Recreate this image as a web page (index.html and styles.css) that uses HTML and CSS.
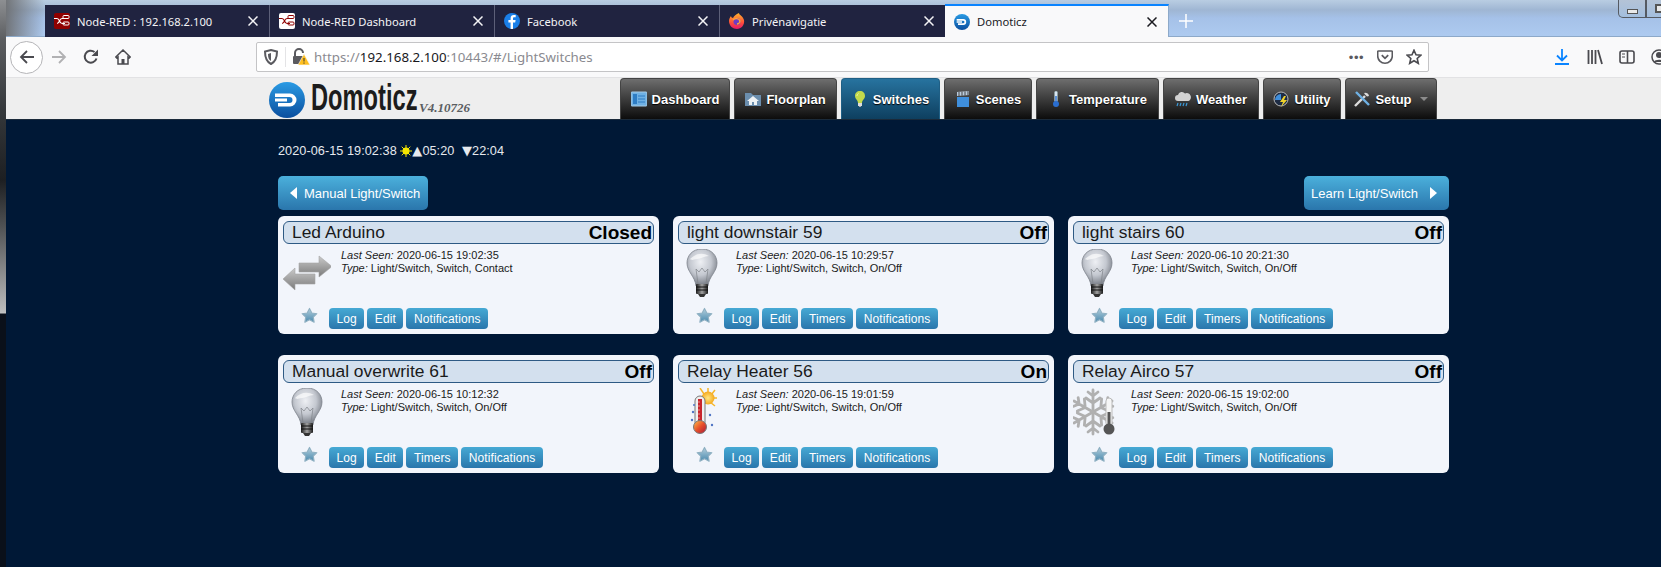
FILE: index.html
```html
<!DOCTYPE html>
<html lang="nl">
<head>
<meta charset="utf-8">
<title>Domoticz</title>
<link rel="stylesheet" href="styles.css">
</head>
<body>
<div class="edge"></div>
<div class="page">
<svg class="sprite" xmlns="http://www.w3.org/2000/svg">
  <defs>
    <radialGradient id="glass" cx="45%" cy="35%" r="65%"><stop offset="0" stop-color="#eef0f4"/><stop offset=".55" stop-color="#c4c8d0"/><stop offset="1" stop-color="#737881"/></radialGradient>
    <linearGradient id="base" x1="0" x2="1" y1="0" y2="0"><stop offset="0" stop-color="#1c1c1c"/><stop offset=".5" stop-color="#a0a0a0"/><stop offset="1" stop-color="#1c1c1c"/></linearGradient>
    <linearGradient id="star" x1="0" x2="0" y1="0" y2="1"><stop offset="0" stop-color="#b4d0de"/><stop offset="1" stop-color="#4a89ad"/></linearGradient>
    <linearGradient id="arrow" x1="0" x2="0" y1="0" y2="1"><stop offset="0" stop-color="#cacaca"/><stop offset="1" stop-color="#7a7a7a"/></linearGradient>
    <linearGradient id="logo" x1="0" x2="0" y1="0" y2="1"><stop offset="0" stop-color="#2a9be4"/><stop offset="1" stop-color="#0a4e9e"/></linearGradient>
    <radialGradient id="sun" cx=".5" cy=".5" r=".5"><stop offset="0" stop-color="#ffe680"/><stop offset="1" stop-color="#f4a81e"/></radialGradient>
    <linearGradient id="fire" x1="0" x2="1" y1="0" y2="1"><stop offset="0" stop-color="#ffc24a"/><stop offset=".5" stop-color="#e8502a"/><stop offset="1" stop-color="#a5163a"/></linearGradient>
    <symbol id="i-logo" viewBox="0 0 36 36">
      <circle cx="18" cy="18" r="18" fill="url(#logo)"/>
      <path d="M6 11.500h15a6.500 6.500 0 0 1 0 13H9v-3.500h11.500a3 3 0 0 0 0-6H6zM6 16.500h12v3H6z" fill="#fff"/>
    </symbol>
    <symbol id="i-star" viewBox="0 0 18 18">
      <path d="M9 1.500l2.500 4.800 5.300.8-3.800 3.700.9 5.300L9 13.600l-4.900 2.500.9-5.300-3.800-3.700 5.300-.8z" fill="url(#star)" stroke="#8fb0c2" stroke-width="1.200" stroke-linejoin="round"/>
    </symbol>
    <symbol id="i-bulb" viewBox="0 0 48 48">
      <path d="M24 0C14 0 9 7 9 14c0 9 8 13 9 23h12c1-10 9-14 9-23C39 7 34 0 24 0z" fill="url(#glass)" stroke="#7f848d" stroke-width=".8"/>
      <path d="M12 10c5-5 12-7 19-3-5 0-8 3-12 3s-4 2-7 0z" fill="#fff" opacity=".65"/>
      <path d="M20 35L18 20l3 3 3-4 3 4 3-3-2 15" fill="none" stroke="#7f848a" stroke-width=".7"/>
      <rect x="18" y="35" width="12" height="10" rx="1" fill="url(#base)"/>
      <path d="M18 38h12M18 41h12" stroke="#111" stroke-width="1"/>
      <path d="M20 45h8l-2 3h-4z" fill="#333"/>
    </symbol>
    <symbol id="i-arrows" viewBox="0 0 48 48">
      <path d="M16 14h20V7l13 10.500L36 28v-5H16z" fill="url(#arrow)" stroke="#a5a5a5" stroke-width=".6"/>
      <path d="M32 25H12v-6L0 30l12 11v-6h20z" fill="url(#arrow)" stroke="#a5a5a5" stroke-width=".6"/>
    </symbol>
    <symbol id="i-heat" viewBox="0 0 48 48">
      <g stroke="#f6b62a" stroke-width="1.500"><path d="M22 0l4 6M30 0v6M37 2l-4 5M39 10h-6M37 18l-5-4"/></g>
      <circle cx="30" cy="10" r="6.500" fill="url(#sun)"/>
      <rect x="17" y="8" width="10" height="31" rx="5" fill="#efefef" stroke="#777"/>
      <rect x="20" y="11" width="4" height="26" fill="#c8252c"/>
      <path d="M20 14h2M20 18h2M20 22h2M20 26h2M20 30h2" stroke="#f3b0a8" stroke-width=".8"/>
      <circle cx="22" cy="39" r="6.500" fill="url(#fire)" stroke="#777"/>
      <g fill="#4f74c4"><circle cx="15" cy="24" r="1.200"/><circle cx="14" cy="32" r="1.200"/><circle cx="32" cy="27" r="1.200"/><circle cx="34" cy="37" r="1.200"/><circle cx="16" cy="17" r="1"/></g>
    </symbol>
    <symbol id="i-snow" viewBox="0 0 48 48">
      <g fill="none" stroke="#b0b0b0" stroke-width="2.800" stroke-linecap="round">
        <g id="arm"><path d="M20 24V2M20 8l-5-4M20 8l5-4M20 15l-7-5M20 15l7-5"/></g>
        <use href="#arm" transform="rotate(60 20 24)"/>
        <use href="#arm" transform="rotate(120 20 24)"/>
        <use href="#arm" transform="rotate(180 20 24)"/>
        <use href="#arm" transform="rotate(240 20 24)"/>
        <use href="#arm" transform="rotate(300 20 24)"/>
      </g>
      <rect x="33" y="10" width="6" height="28" rx="3" fill="#f6f6f6" stroke="#bbb"/>
      <rect x="34.500" y="24" width="3" height="14" fill="#555"/>
      <circle cx="36" cy="41" r="5.500" fill="#555"/>
    </symbol>
    <symbol id="i-dash" viewBox="0 0 16 16"><rect x="0" y="1" width="16" height="14" rx="1" fill="#6fb1e4" stroke="#a6cbe6"/><rect x="2" y="3" width="4" height="10" fill="#2e7dc4"/><path d="M7 5h7M7 8h7M7 11h7" stroke="#2e7dc4"/></symbol>
    <symbol id="i-floor" viewBox="0 0 16 16"><path d="M0 2h6l2 2h8v11H0z" fill="#6b8eae"/><path d="M8 5l6 5h-2v4H9v-3H7v3H4v-4H2z" fill="#eef2f5"/></symbol>
    <symbol id="i-nbulb" viewBox="0 0 16 16"><path d="M8 0c-3 0-5 2-5 5 0 3 3 4 3 7h4c0-3 3-4 3-7 0-3-2-5-5-5z" fill="#c2d94c"/><path d="M6.500 2.500C5.500 3 5 4 5 5" stroke="#eef6b0" fill="none"/><rect x="6" y="12" width="4" height="3" fill="#ddd"/><rect x="7" y="15" width="2" height="1" fill="#aaa"/></symbol>
    <symbol id="i-scene" viewBox="0 0 16 16"><rect x="2" y="6" width="12" height="10" fill="#3f8fdc"/><path d="M2 1l12-1v4L2 5z" fill="#bcd"/><path d="M4 1v4M7 .7v4M10 .5v4M13 .2v4" stroke="#444"/></symbol>
    <symbol id="i-temp" viewBox="0 0 16 16"><rect x="6.500" y="0" width="3" height="11" rx="1.500" fill="#d9e6f2" stroke="#8aa" stroke-width=".4"/><rect x="7.300" y="5" width="1.400" height="7" fill="#2a6ed0"/><circle cx="8" cy="13" r="3" fill="#2a6ed0"/></symbol>
    <symbol id="i-cloud" viewBox="0 0 16 16"><path d="M3 10a3 3 0 0 1 0-6 4 4 0 0 1 7-1.500A3.500 3.500 0 0 1 13.500 10z" fill="#d2d2d2"/><path d="M3 12l-1 3M6 12l-1 3M9 12l-1 3M12 12l-1 3" stroke="#3a9ad9" stroke-width="1.200"/></symbol>
    <symbol id="i-util" viewBox="0 0 16 16"><circle cx="8" cy="8" r="7" fill="#1e2c44" stroke="#b9b9b9"/><path d="M2 9a6 6 0 0 1 6-6v6z" fill="#3f8fdc"/><path d="M11 5l-4 6h3l-2 5 6-7h-3l2-4z" fill="#f0d22a"/></symbol>
    <symbol id="i-tools" viewBox="0 0 16 16"><path d="M1 15L11 5" stroke="#dcdcdc" stroke-width="2.400"/><path d="M10 2a3.500 3.500 0 0 1 5 3l-2 .5L11 3.500z" fill="#dcdcdc"/><path d="M2 1l13 13" stroke="#6fb1e4" stroke-width="2.400"/></symbol>
    <symbol id="i-sunny" viewBox="0 0 12 12"><circle cx="6" cy="6" r="3.500" fill="#f6e600"/><path d="M6 0v12M0 6h12M1.700 1.700l8.600 8.600M10.300 1.700l-8.600 8.600" stroke="#f6e600" stroke-width="1"/></symbol>
    <symbol id="i-close" viewBox="0 0 10 10"><path d="M.5.500l9 9M9.500.500l-9 9" stroke="currentColor" stroke-width="1.500" fill="none"/></symbol>
    <symbol id="i-nodered" viewBox="0 0 16 16"><path d="M0 5.500h3c3 0 2 5 5 5h3M3 10.500c3 0 2-5 5-5h4" fill="none" stroke="currentColor" stroke-width="1.100"/><rect x="9" y="2.500" width="6" height="3" rx="1" fill="none" stroke="currentColor"/><rect x="9" y="9" width="6" height="3" rx="1" fill="none" stroke="currentColor"/></symbol>
  </defs>
</svg>

<div class="tabstrip">
  <div class="tab">
    <span class="favicon favicon-red"><svg class="fav-svg"><use href="#i-nodered"/></svg></span>
    <span class="tab-label">Node-RED : 192.168.2.100</span>
    <svg class="tab-close"><use href="#i-close"/></svg>
  </div>
  <div class="tab">
    <span class="favicon favicon-white"><svg class="fav-svg"><use href="#i-nodered"/></svg></span>
    <span class="tab-label">Node-RED Dashboard</span>
    <svg class="tab-close"><use href="#i-close"/></svg>
  </div>
  <div class="tab">
    <svg class="fav-svg" viewBox="0 0 16 16"><circle cx="8" cy="8" r="8" fill="#1a7fe8"/><path d="M9 16V9.500h2.200l.4-2.500H9V5.500c0-.8.300-1.300 1.400-1.300h1.300V2c-.6-.1-1.200-.1-1.900-.1C7.900 1.900 6.600 3 6.600 5.200V7H4.400v2.500h2.200V16z" fill="#fff"/></svg>
    <span class="tab-label">Facebook</span>
    <svg class="tab-close"><use href="#i-close"/></svg>
  </div>
  <div class="tab">
    <svg class="fav-svg" viewBox="0 0 16 16"><defs><linearGradient id="ff" x1="0" x2="0" y1="0" y2="1"><stop offset="0" stop-color="#ffb52e"/><stop offset=".6" stop-color="#ff4f3a"/><stop offset="1" stop-color="#e3186d"/></linearGradient></defs><path d="M10 0c0 2 4 3 5 7 1 5-3 9-7 9s-8-3-8-8c0-2 1-4 2-5 0 1 1 2 2 2 1-2 3-4 6-5z" fill="url(#ff)"/><circle cx="8" cy="8.500" r="3.500" fill="#6e3bc5"/><path d="M4 7c2-2 6-2 7 1 0 2-2 3-3 3" fill="none" stroke="#ffa436" stroke-width="1.500"/></svg>
    <span class="tab-label">Privénavigatie</span>
    <svg class="tab-close"><use href="#i-close"/></svg>
  </div>
  <div class="tab tab-active">
    <svg class="fav-svg"><use href="#i-logo"/></svg>
    <span class="tab-label">Domoticz</span>
    <svg class="tab-close"><use href="#i-close"/></svg>
  </div>
  <svg class="newtab" viewBox="0 0 16 16"><path d="M8 1v14M1 8h14" stroke="#fff" stroke-width="1.500"/></svg>
</div>
<div class="winctl">
  <span class="winbtn"><span class="win-min"></span></span>
  <span class="winbtn"><span class="win-max"></span></span>
</div>

<div class="toolbar">
  <span class="tool-back">
    <svg class="tool-ico" viewBox="0 0 16 16"><path d="M15 8H2M8 2L2 8l6 6" fill="none" stroke="#4a4a4f" stroke-width="1.800"/></svg>
  </span>
  <svg class="tool-ico tool-fwd" viewBox="0 0 16 16"><path d="M1 8h13M8 2l6 6-6 6" fill="none" stroke="#b1b1b3" stroke-width="1.800"/></svg>
  <svg class="tool-ico" viewBox="0 0 16 16"><path d="M13.500 9.500A6 6 0 1 1 11.500 3" fill="none" stroke="#4a4a4f" stroke-width="2"/><path d="M15 0.500V7H8.500z" fill="#4a4a4f"/></svg>
  <svg class="tool-ico" viewBox="0 0 16 16"><path d="M8 1L0.800 8l1 1L3 8v7h10V8l1.200 1 1-1z" fill="none" stroke="#4a4a4f" stroke-width="1.500"/><rect x="6.500" y="10" width="3" height="5" fill="#4a4a4f"/></svg>
  <div class="urlbar">
    <svg class="url-shield" viewBox="0 0 16 16"><path d="M8 1l6 1.500c0 6-1 10-6 12.500C3 12.500 2 8.500 2 2.500z" fill="none" stroke="#5a5a5f" stroke-width="2"/><path d="M8 4v8c-2-1-3-3-3-7z" fill="#5a5a5f"/></svg>
    <span class="url-div"></span>
    <svg class="url-lock" viewBox="0 0 18 18"><path d="M3 8V5a4 4 0 0 1 8 0" fill="none" stroke="#5a5a5f" stroke-width="2"/><rect x="1" y="8" width="11" height="8" rx="1" fill="#5a5a5f"/><path d="M12 6l6 11H6z" fill="#ffbf1f" stroke="#f9f9fa" stroke-width=".6"/><path d="M12 10v3.500M12 14.500v1.200" stroke="#333" stroke-width="1"/></svg>
    <span class="url-text"><span class="url-dim">https://</span><span class="url-host">192.168.2.100</span><span class="url-dim">:10443/#/LightSwitches</span></span>
    <span class="url-dots">•••</span>
    <svg class="url-ico" viewBox="0 0 16 16"><path d="M1.500 2h13c.5 0 .8.300.8.800V7c0 4-3.300 7.300-7.300 7.300S.7 11 .7 7V2.800c0-.5.300-.8.800-.8z" fill="none" stroke="#5a5a5f" stroke-width="1.600"/><path d="M4.800 6.200L8 9.300l3.200-3.100" fill="none" stroke="#5a5a5f" stroke-width="1.800"/></svg>
    <svg class="url-ico" viewBox="0 0 16 16"><path d="M8 1.200l2 4.500 4.900.5-3.700 3.300 1.100 4.800L8 11.800l-4.300 2.500 1.100-4.800L1.100 6.200 6 5.700z" fill="none" stroke="#4a4a4f" stroke-width="1.600"/></svg>
  </div>
  <svg class="tool-ico tool-dl" viewBox="0 0 16 16"><path d="M8 0v11M3 6.500L8 11.500l5-5" fill="none" stroke="#0a84ff" stroke-width="1.800"/><path d="M1 15h14" stroke="#0a84ff" stroke-width="2"/></svg>
  <svg class="tool-ico tool-lib" viewBox="0 0 16 16"><path d="M1.500 1v14M5 1v14M8.500 1v14M11 1l4 14" fill="none" stroke="#4a4a4f" stroke-width="1.800"/></svg>
  <svg class="tool-ico" viewBox="0 0 16 16"><rect x="1" y="2" width="14" height="12" rx="2" fill="none" stroke="#4a4a4f" stroke-width="1.600"/><path d="M8.500 2v12" stroke="#4a4a4f" stroke-width="1.600"/><path d="M3 5h3M3 8h3" stroke="#4a4a4f"/></svg>
  <svg class="tool-ico" viewBox="0 0 16 16"><circle cx="8" cy="8" r="7" fill="none" stroke="#4a4a4f" stroke-width="1.500"/><circle cx="8" cy="6" r="3" fill="#4a4a4f"/><path d="M2.800 13c1-3 9.400-3 10.400 0z" fill="#4a4a4f"/></svg>
</div>

<header class="site-head">
  <div class="brand">
    <svg class="brand-logo"><use href="#i-logo"/></svg>
    <span class="brand-name">Domoticz</span>
    <span class="brand-ver">V4.10726</span>
  </div>
  <nav class="nav">
    <a class="nav-btn"><svg class="nav-ico"><use href="#i-dash"/></svg>Dashboard</a>
    <a class="nav-btn"><svg class="nav-ico"><use href="#i-floor"/></svg>Floorplan</a>
    <a class="nav-btn nav-active"><svg class="nav-ico"><use href="#i-nbulb"/></svg>Switches</a>
    <a class="nav-btn"><svg class="nav-ico"><use href="#i-scene"/></svg>Scenes</a>
    <a class="nav-btn"><svg class="nav-ico"><use href="#i-temp"/></svg>Temperature</a>
    <a class="nav-btn"><svg class="nav-ico"><use href="#i-cloud"/></svg>Weather</a>
    <a class="nav-btn"><svg class="nav-ico"><use href="#i-util"/></svg>Utility</a>
    <a class="nav-btn"><svg class="nav-ico"><use href="#i-tools"/></svg>Setup<span class="nav-caret"></span></a>
  </nav>
</header>

<main class="content">
  <div class="clock">2020-06-15 19:02:38 <svg class="clock-sun"><use href="#i-sunny"/></svg><span class="tri">▲</span>05:20 <span class="tri tri-down">▼</span>22:04</div>
  <div class="pager">
    <a class="big-btn"><span class="caret-left"></span>Manual Light/Switch</a>
    <a class="big-btn big-right">Learn Light/Switch<span class="caret-right"></span></a>
  </div>
  <div class="cards">

    <section class="card">
      <div class="card-title"><span>Led Arduino</span><b>Closed</b></div>
      <div class="card-body">
        <svg class="dev-ico"><use href="#i-arrows"/></svg>
        <p class="meta"><i>Last Seen:</i> 2020-06-15 19:02:35<br><i>Type:</i> Light/Switch, Switch, Contact</p>
      </div>
      <div class="card-foot">
        <svg class="fav-star"><use href="#i-star"/></svg>
        <a class="btn">Log</a><a class="btn">Edit</a><a class="btn">Notifications</a>
      </div>
    </section>

    <section class="card">
      <div class="card-title"><span>light downstair 59</span><b>Off</b></div>
      <div class="card-body">
        <svg class="dev-ico"><use href="#i-bulb"/></svg>
        <p class="meta"><i>Last Seen:</i> 2020-06-15 10:29:57<br><i>Type:</i> Light/Switch, Switch, On/Off</p>
      </div>
      <div class="card-foot">
        <svg class="fav-star"><use href="#i-star"/></svg>
        <a class="btn">Log</a><a class="btn">Edit</a><a class="btn">Timers</a><a class="btn">Notifications</a>
      </div>
    </section>

    <section class="card">
      <div class="card-title"><span>light stairs 60</span><b>Off</b></div>
      <div class="card-body">
        <svg class="dev-ico"><use href="#i-bulb"/></svg>
        <p class="meta"><i>Last Seen:</i> 2020-06-10 20:21:30<br><i>Type:</i> Light/Switch, Switch, On/Off</p>
      </div>
      <div class="card-foot">
        <svg class="fav-star"><use href="#i-star"/></svg>
        <a class="btn">Log</a><a class="btn">Edit</a><a class="btn">Timers</a><a class="btn">Notifications</a>
      </div>
    </section>

    <section class="card">
      <div class="card-title"><span>Manual overwrite 61</span><b>Off</b></div>
      <div class="card-body">
        <svg class="dev-ico"><use href="#i-bulb"/></svg>
        <p class="meta"><i>Last Seen:</i> 2020-06-15 10:12:32<br><i>Type:</i> Light/Switch, Switch, On/Off</p>
      </div>
      <div class="card-foot">
        <svg class="fav-star"><use href="#i-star"/></svg>
        <a class="btn">Log</a><a class="btn">Edit</a><a class="btn">Timers</a><a class="btn">Notifications</a>
      </div>
    </section>

    <section class="card">
      <div class="card-title"><span>Relay Heater 56</span><b>On</b></div>
      <div class="card-body">
        <svg class="dev-ico"><use href="#i-heat"/></svg>
        <p class="meta"><i>Last Seen:</i> 2020-06-15 19:01:59<br><i>Type:</i> Light/Switch, Switch, On/Off</p>
      </div>
      <div class="card-foot">
        <svg class="fav-star"><use href="#i-star"/></svg>
        <a class="btn">Log</a><a class="btn">Edit</a><a class="btn">Timers</a><a class="btn">Notifications</a>
      </div>
    </section>

    <section class="card">
      <div class="card-title"><span>Relay Airco 57</span><b>Off</b></div>
      <div class="card-body">
        <svg class="dev-ico"><use href="#i-snow"/></svg>
        <p class="meta"><i>Last Seen:</i> 2020-06-15 19:02:00<br><i>Type:</i> Light/Switch, Switch, On/Off</p>
      </div>
      <div class="card-foot">
        <svg class="fav-star"><use href="#i-star"/></svg>
        <a class="btn">Log</a><a class="btn">Edit</a><a class="btn">Timers</a><a class="btn">Notifications</a>
      </div>
    </section>

  </div>
</main>
</div>
</body>
</html>
```
FILE: styles.css
```css
* { box-sizing: border-box; }
html, body { margin: 0; height: 100%; }
body {
  display: flex;
  height: 567px;
  overflow: hidden;
  background: #001836;
  font-family: "Liberation Sans", Arial, sans-serif;
}
.edge {
  flex: 0 0 6px;
  background: linear-gradient(180deg, #8d8f92 0, #5b5d60 40px, #35383b 110px, #1d1f22 180px, #4e5052 225px, #bcbdbe 312px, #c4c5c6 313px, #0a101a 314px, #0a101a 100%);
}
.page { flex: 1; min-width: 0; display: flex; flex-direction: column; position: relative; }
.sprite { display: block; width: 0; height: 0; overflow: hidden; }

/* browser tabs */
.tabstrip {
  height: 37px;
  padding: 5px 0 0 39px;
  display: flex;
  background:
    linear-gradient(90deg, rgba(110,112,115,.95) 0, rgba(170,200,235,0) 39px),
    linear-gradient(180deg, #b9cde2 0, #9fb6d3 10px, #a5c1e8 18px, #aecbf0 37px);
  border-bottom: 1px solid #8da9c9;
}
.tab {
  width: 225px;
  height: 32px;
  padding: 0 11px 0 9px;
  display: flex;
  align-items: center;
  background: #202340;
  color: #f4f4f6;
  border-right: 1px solid #5d6079;
  font: 11.200px "Noto Sans", "Open Sans", sans-serif;
}
.tab:nth-child(4) { border-right: 0; }
.tab-active {
  width: 224px;
  background: #f9f9fa;
  color: #1a1a1f;
  border-top: 2px solid #0a84ff;
  border-right: 1px solid #8da9c9;
  height: 33px;
  margin-top: -1px;
}
.tab-label { flex: 1; margin-left: 7px; white-space: nowrap; }
.fav-svg { width: 16px; height: 16px; flex: none; display: block; }
.favicon { width: 16px; height: 16px; flex: none; display: block; border-radius: 2px; }
.favicon-red { background: #8f0000; color: #fff; }
.favicon-white { background: #fff; color: #8f0000; }
.tab-close { width: 10px; height: 10px; flex: none; }
.newtab { width: 16px; height: 16px; margin: 8px 0 0 9px; }

.winctl { position: absolute; top: 0; right: -13px; height: 18px; display: flex; }
.winbtn {
  width: 28px;
  height: 18px;
  border: 1px solid #555a62;
  border-top: 0;
  background: linear-gradient(180deg, #b4c3d6, #a3bede);
  display: flex;
  align-items: center;
  justify-content: center;
}
.winbtn:first-child { border-radius: 0 0 0 5px; }
.win-min { width: 11px; height: 5px; margin-top: 5px; background: #e9e9e9; border: 1px solid #555; }
.win-max { width: 11px; height: 9px; background: #e9e9e9; border: 2px solid #555; }

/* browser toolbar */
.toolbar {
  height: 41px;
  display: flex;
  align-items: center;
  background: #f9f9fa;
  border-bottom: 1px solid #e2e2e4;
  padding-left: 4px;
}
.tool-back {
  width: 33px;
  height: 33px;
  border: 1px solid #b5b5b8;
  border-radius: 50%;
  background: #fff;
  display: flex;
  align-items: center;
  justify-content: center;
  flex: none;
}
.tool-back .tool-ico { margin: 0; }
.tool-ico { width: 16px; height: 16px; flex: none; margin-left: 16px; }
.toolbar .tool-fwd { margin-left: 8px; }
.urlbar {
  width: 1173px;
  height: 30px;
  margin-left: 125px;
  padding: 0 6px 0 6px;
  background: #fff;
  border: 1px solid #c4c4c6;
  border-radius: 2px;
  display: flex;
  align-items: center;
  flex: none;
}
.url-shield { width: 16px; height: 16px; flex: none; }
.url-div { width: 1px; height: 20px; margin: 0 5px 0 6px; background: #e4e4e6; }
.url-lock { width: 18px; height: 18px; flex: none; margin-left: 1px; }
.url-text { margin-left: 4px; flex: 1; font: 13.300px "Noto Sans", "Open Sans", sans-serif; white-space: nowrap; }
.url-dim { color: #8a8a90; }
.url-host { color: #18181c; }
.url-dots { color: #5a5a5f; font: 13px "Liberation Sans", sans-serif; letter-spacing: .5px; }
.url-ico { width: 16px; height: 16px; flex: none; margin-left: 13px; }
.toolbar .tool-dl { margin-left: 125px; }
.toolbar .tool-lib { margin-left: 17px; }

/* Domoticz header */
.site-head {
  height: 42px;
  display: flex;
  padding-left: 263px;
  background: #eeeeee;
  border-bottom: 1px solid #1a2a3a;
}
.brand { width: 351px; flex: none; display: flex; align-items: flex-start; }
.brand-logo { width: 36px; height: 36px; margin-top: 4px; flex: none; }
.brand-name {
  width: 106px;
  margin-left: 6px;
  flex: none;
  white-space: nowrap;
  font: bold 37px/40px "Liberation Sans", sans-serif;
  color: #1c1c1c;
  transform: scaleX(.64);
  transform-origin: left center;
}
.brand-ver {
  margin: 23px 0 0 2px;
  font: italic bold 13px/14px "Liberation Serif", serif;
  color: #5a5d61;
}
.nav {
  display: grid;
  grid-template-columns: 110px 103px 99px 88px 123px 96px 78px 92px;
  column-gap: 4px;
}
.nav-btn {
  height: 41px;
  display: flex;
  align-items: center;
  justify-content: center;
  gap: 5px;
  background: linear-gradient(180deg, #6e6e6e 0, #4a4a4a 35%, #0c0c0c 100%);
  border: 1px solid #444;
  border-bottom: 0;
  border-radius: 4px 4px 0 0;
  color: #fff;
  font-size: 13px;
  font-weight: bold;
  text-shadow: 0 1px 1px #000;
}
.nav-active { background: linear-gradient(180deg, #27739f 0, #0e3f5f 100%); border-color: #1f5f85; }
.nav-ico { width: 16px; height: 16px; flex: none; }
.nav-caret {
  width: 0;
  height: 0;
  margin-left: 3px;
  border-left: 4px solid transparent;
  border-right: 4px solid transparent;
  border-top: 4px solid #8b8b8b;
}

/* page */
.content { width: 1443px; padding: 23px 0 0 272px; }
.clock {
  color: #e6e9ee;
  font-size: 12.700px;
  letter-spacing: .05px;
  line-height: 16px;
  height: 16px;
}
.clock-sun { width: 12px; height: 12px; vertical-align: -2px; }
.tri { font: 13px/16px "DejaVu Sans", sans-serif; }
.tri-down { margin-left: 4px; }
.pager {
  display: flex;
  justify-content: space-between;
  margin-top: 17px;
  height: 40px;
}
.big-btn {
  height: 34px;
  padding: 0 8px 0 12px;
  display: flex;
  align-items: center;
  background: linear-gradient(180deg, #4bb0dc 0, #2a76ac 100%);
  border-radius: 5px;
  color: #fff;
  font-size: 13px;
}
.big-right { padding: 0 12px 0 7px; }
.caret-left {
  width: 0; height: 0; margin-right: 7px;
  border-top: 6px solid transparent;
  border-bottom: 6px solid transparent;
  border-right: 7px solid #fff;
}
.caret-right {
  width: 0; height: 0; margin-left: 12px;
  border-top: 6px solid transparent;
  border-bottom: 6px solid transparent;
  border-left: 7px solid #fff;
}
.cards {
  display: grid;
  grid-template-columns: repeat(3, 381px);
  grid-auto-rows: 118px;
  column-gap: 14px;
  row-gap: 21px;
}
.card {
  padding: 5px;
  background: #f2f5fb;
  border-radius: 6px;
  display: flex;
  flex-direction: column;
  color: #111;
}
.card-title {
  height: 23px;
  padding: 0 1px 0 8px;
  display: flex;
  justify-content: space-between;
  align-items: center;
  background: #d3e0ee;
  border: 1px solid #2e5a84;
  border-radius: 6px;
  font-size: 17.400px;
  line-height: 21px;
  color: #1a1a1a;
}
.card-title b { font-size: 19px; color: #000; }
.card-body { display: flex; margin-top: 5px; }
.dev-ico { width: 48px; height: 48px; flex: none; }
.meta { margin: 0 0 0 10px; font-size: 11px; line-height: 13px; color: #1a1a1a; }
.card-foot { margin-top: auto; display: flex; align-items: flex-start; padding-left: 18px; }
.fav-star { width: 17px; height: 17px; margin-right: 11px; flex: none; margin-top: -1px; }
.btn {
  height: 21px;
  padding: 0 7.500px;
  margin-right: 3px;
  display: flex;
  align-items: center;
  background: linear-gradient(180deg, #46a9d4 0, #2a76ac 100%);
  border-radius: 4px;
  color: #fff;
  font-size: 12px;
  letter-spacing: .1px;
}
```
